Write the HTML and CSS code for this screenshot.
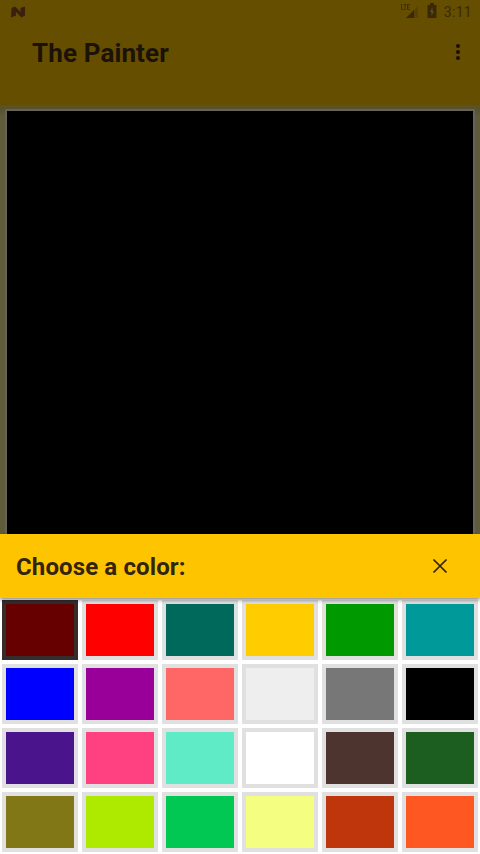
FILE: index.html
```
<!DOCTYPE html>
<html lang="en">
<head>
<meta charset="utf-8">
<title>The Painter</title>
<link rel="stylesheet" href="styles.css">
</head>
<body>
<header class="app-header">
  <div class="status-bar">
    <svg class="notification" width="16" height="14" viewBox="0 0 16 14"><path d="M1.5 3 5 1.5 10.5 7V3L15 1.5V10.5L11.5 12.5 6 7V10.5L1 12.5Z"/></svg>
    <div class="status-icons">
      <svg width="20" height="16" viewBox="0 0 20 16"><path d="M18 3V15H6Z" opacity=".3"/><path d="M14 7V15H6Z"/><path d="M1.5 1V6.5H4M3.5 1.5H6.5M5 1.5V7M10 1.5H7.5V6.5H10M7.5 4H9.5" fill="none" stroke="#39280a" stroke-width=".8"/></svg>
      <svg width="10" height="16" viewBox="0 0 10 16"><path fill-rule="evenodd" d="M3 0H7V2H9.5V15H.5V2H3ZM5.5 4 3 9H4.5V13L7 8H5.5Z"/></svg>
      <span class="clock">3:11</span>
    </div>
  </div>
  <div class="title-bar">
    <h1>The Painter</h1>
    <svg class="more" width="6" height="18" viewBox="0 0 6 18"><circle cx="3" cy="3" r="2"/><circle cx="3" cy="9" r="2"/><circle cx="3" cy="15" r="2"/></svg>
  </div>
</header>
<main class="workspace"><div class="canvas"></div></main>
<section class="sheet">
  <div class="sheet-header">
    <h2>Choose a color:</h2>
    <svg width="16" height="16" viewBox="0 0 16 16"><path d="M1.5 1.5 14.5 14.5M14.5 1.5 1.5 14.5"/></svg>
  </div>
  <div class="palette">
    <i class="swatch maroon selected"></i><i class="swatch red"></i><i class="swatch pine"></i><i class="swatch yellow"></i><i class="swatch green"></i><i class="swatch teal"></i>
    <i class="swatch blue"></i><i class="swatch purple"></i><i class="swatch coral"></i><i class="swatch silver"></i><i class="swatch gray"></i><i class="swatch black"></i>
    <i class="swatch indigo"></i><i class="swatch pink"></i><i class="swatch mint"></i><i class="swatch white"></i><i class="swatch brown"></i><i class="swatch forest"></i>
    <i class="swatch olive"></i><i class="swatch lime"></i><i class="swatch emerald"></i><i class="swatch lemon"></i><i class="swatch rust"></i><i class="swatch orange"></i>
  </div>
</section>
</body>
</html>
```
FILE: styles.css
```
* { box-sizing: border-box; }
body {
  margin: 0;
  width: 480px;
  height: 854px;
  overflow: hidden;
  display: flex;
  flex-direction: column;
  font-family: Roboto, sans-serif;
  background: #fff;
}
h1, h2 { margin: 0; font-weight: 700; letter-spacing: .12px; }
.app-header { height: 105px; flex: none; background: #664e00; }
.status-bar {
  height: 24px;
  padding: 0 8px 0 10px;
  display: flex;
  align-items: center;
  justify-content: space-between;
  fill: #39280a;
}
.notification { fill: #3b2010; }
.status-icons { display: flex; align-items: center; gap: 7px; margin-top: -2px; }
.clock { font-size: 14px; line-height: 16px; color: #39280a; padding-top: 2px; letter-spacing: .3px; }
.title-bar {
  height: 56px;
  padding: 0 19px 0 32px;
  display: flex;
  align-items: center;
  justify-content: space-between;
}
.title-bar h1 { font-size: 26px; line-height: 32px; color: #1b1208; margin-top: 2px; }
.more { fill: #1e0d04; }
.workspace {
  height: 429px;
  flex: none;
  padding: 4px 5px 0;
  background: linear-gradient(#5f5020, #58512f 4px, #605b3a 12px);
}
.canvas {
  height: 100%;
  border: 2px solid #66635b;
  border-bottom: 0;
  background: #000;
}
.sheet { flex: none; }
.sheet-header {
  position: relative;
  height: 64px;
  padding: 0 32px 0 16px;
  display: flex;
  align-items: center;
  justify-content: space-between;
  background: #ffc400;
  box-shadow: 0 2px 4px rgba(0, 0, 0, .45);
}
.sheet-header h2 { font-size: 24px; line-height: 32px; color: #33240d; margin-top: 2px; }
.sheet-header svg { fill: none; stroke: #34210b; stroke-width: 1.7; }
.palette {
  display: grid;
  grid-template-columns: repeat(6, 76px);
  grid-auto-rows: 60px;
  gap: 4px;
  padding: 2px;
}
.swatch { border: 4px solid #e0e0e0; }
.selected { border-color: #352c2c; }
.maroon { background: #660000; }
.red { background: #ff0000; }
.pine { background: #00695c; }
.yellow { background: #ffcc00; }
.green { background: #009900; }
.teal { background: #009999; }
.blue { background: #0000ff; }
.purple { background: #990099; }
.coral { background: #ff6666; }
.silver { background: #eeeeee; }
.gray { background: #777777; }
.black { background: #000000; }
.indigo { background: #4a148c; }
.pink { background: #ff4081; }
.mint { background: #5eebc6; }
.white { background: #ffffff; }
.brown { background: #4e342e; }
.forest { background: #1b5e20; }
.olive { background: #827717; }
.lime { background: #aeea00; }
.emerald { background: #00c853; }
.lemon { background: #f4ff81; }
.rust { background: #bf360c; }
.orange { background: #ff5722; }
```
